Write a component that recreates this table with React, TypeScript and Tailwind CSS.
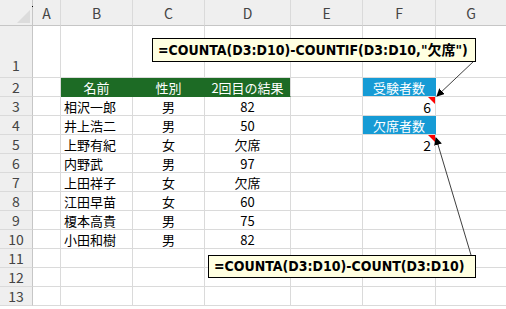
import React from 'react';

const cols = ['A', 'B', 'C', 'D', 'E', 'F', 'G'];

const rows: { name: string; sex: string; result: string }[] = [
    { name: '相沢一郎', sex: '男', result: '82' },
    { name: '井上浩二', sex: '男', result: '50' },
    { name: '上野有紀', sex: '女', result: '欠席' },
    { name: '内野武', sex: '男', result: '97' },
    { name: '上田祥子', sex: '女', result: '欠席' },
    { name: '江田早苗', sex: '女', result: '60' },
    { name: '榎本高貴', sex: '男', result: '75' },
    { name: '小田和樹', sex: '男', result: '82' },
];

const font = { fontFamily: '"Noto Sans CJK JP", "Noto Sans", sans-serif' };

const Cell: React.FC<{ className?: string; children?: React.ReactNode }> = ({ className = '', children }) => (
    <div className={`border-r border-b border-[#dadada] flex items-center text-[13px] leading-none text-black overflow-visible whitespace-nowrap ${className}`}>
        {children}
    </div>
);

const RowHead: React.FC<{ n: number; className?: string }> = ({ n, className = '' }) => (
    <div className={`bg-[#efefef] border-r border-r-[#c6c6c6] border-b border-b-[#dadada] flex items-center justify-center text-[14px] text-[#444] ${className}`}>
        {n}
    </div>
);

const Callout: React.FC<{ className: string; children: React.ReactNode }> = ({ className, children }) => (
    <div
        className={`absolute bg-[#ffffe1] border border-black flex items-center pl-[5px] text-[14px] font-bold text-black whitespace-nowrap ${className}`}
        style={{ fontFamily: '"DejaVu Sans Condensed", "DejaVu Sans", "Noto Sans CJK JP", sans-serif' }}
    >
        {children}
    </div>
);

export default function App() {
    const dataRows = [] as React.ReactNode[];
    for (let r = 3; r <= 13; r++) {
        const d = rows[r - 3];
        let f: React.ReactNode = null;
        let fClass = '';
        if (r === 3) { f = '6'; fClass = 'justify-end pr-[4px] text-[14px]'; }
        if (r === 4) { f = '欠席者数'; fClass = 'bg-[#169bd5] border-r-[#169bd5] text-white justify-center'; }
        if (r === 5) { f = '2'; fClass = 'justify-end pr-[4px] text-[14px]'; }
        dataRows.push(
            <React.Fragment key={r}>
                <RowHead n={r} />
                <Cell />
                <Cell className="pl-[3px] pt-[1px]">{d?.name}</Cell>
                <Cell className="justify-center pt-[1px]">{d?.sex}</Cell>
                <Cell className="justify-center pt-[1px]">{d?.result}</Cell>
                <Cell />
                <Cell className={`pt-[1px] ${fClass}`}>{f}</Cell>
                <Cell />
                <div className="border-b border-[#dadada]" />
            </React.Fragment>
        );
    }

    return (
        <div className="relative w-[506px] h-[309px] overflow-hidden bg-white" style={font}>
            <div className="grid grid-cols-[33px_28px_72px_72px_86px_72px_73px_71px_1fr] grid-rows-[26px_52px_repeat(12,19px)]">
                {/* column header row */}
                <div className="relative bg-[#efefef] border-r border-r-[#c6c6c6] border-b border-b-[#c6c6c6]">
                    <svg className="absolute left-[17px] top-[10px]" width="13" height="13" viewBox="0 0 13 13">
                        <polygon points="13,0 13,13 0,13" fill="#dcdcdc" />
                    </svg>
                    <div className="absolute left-[32px] top-[6px] w-px h-px bg-black" />
                </div>
                {cols.map((c) => (
                    <div key={c} className="bg-[#efefef] border-r border-r-[#dadada] border-b border-b-[#c6c6c6] flex items-center justify-center pt-[1px] text-[14px] text-[#444]">
                        {c}
                    </div>
                ))}
                <div className="bg-[#efefef] border-b border-b-[#c6c6c6]" />

                {/* row 1 */}
                <RowHead n={1} className="items-end pb-[1px]" />
                <Cell /><Cell /><Cell /><Cell /><Cell /><Cell /><Cell />
                <div className="border-b border-[#dadada]" />

                {/* row 2 */}
                <RowHead n={2} />
                <Cell />
                <Cell className="bg-[#1d6b25] border-r-[#1d6b25] border-b-[#1d6b25] justify-center text-white pt-[1px]">名前</Cell>
                <Cell className="bg-[#1d6b25] border-r-[#1d6b25] border-b-[#1d6b25] justify-center text-white pt-[1px]">性別</Cell>
                <Cell className="bg-[#1d6b25] border-b-[#1d6b25] justify-center text-white pt-[1px]">2回目の結果</Cell>
                <Cell />
                <Cell className="bg-[#169bd5] border-r-[#169bd5] justify-center text-white pt-[1px]">受験者数</Cell>
                <Cell />
                <div className="border-b border-[#dadada]" />

                {dataRows}
            </div>

            {/* comment indicators */}
            <svg className="absolute left-[428px] top-[97px]" width="7" height="7" viewBox="0 0 7 7">
                <polygon points="0,0 7,0 7,7" fill="#ff0000" />
            </svg>
            <svg className="absolute left-[428px] top-[135px]" width="7" height="7" viewBox="0 0 7 7">
                <polygon points="0,0 7,0 7,7" fill="#ff0000" />
            </svg>

            {/* arrows */}
            <svg className="absolute left-0 top-0 pointer-events-none" width="506" height="309" viewBox="0 0 506 309">
                <defs>
                    <marker id="ah" markerWidth="8" markerHeight="8" refX="7" refY="4" orient="auto" markerUnits="userSpaceOnUse">
                        <polygon points="0,0 8,4 0,8" fill="#000" />
                    </marker>
                </defs>
                <line x1="474" y1="61" x2="437" y2="96" stroke="#404040" strokeWidth="1" markerEnd="url(#ah)" />
                <line x1="471" y1="255" x2="436" y2="138" stroke="#404040" strokeWidth="1" markerEnd="url(#ah)" />
            </svg>

            <Callout className="left-[152px] top-[38px] w-[324px] h-[24px]">
                =COUNTA(D3:D10)-COUNTIF(D3:D10,"欠席")
            </Callout>
            <Callout className="left-[208px] top-[255px] w-[268px] h-[23px]">
                =COUNTA(D3:D10)-COUNT(D3:D10)
            </Callout>
        </div>
    );
}
